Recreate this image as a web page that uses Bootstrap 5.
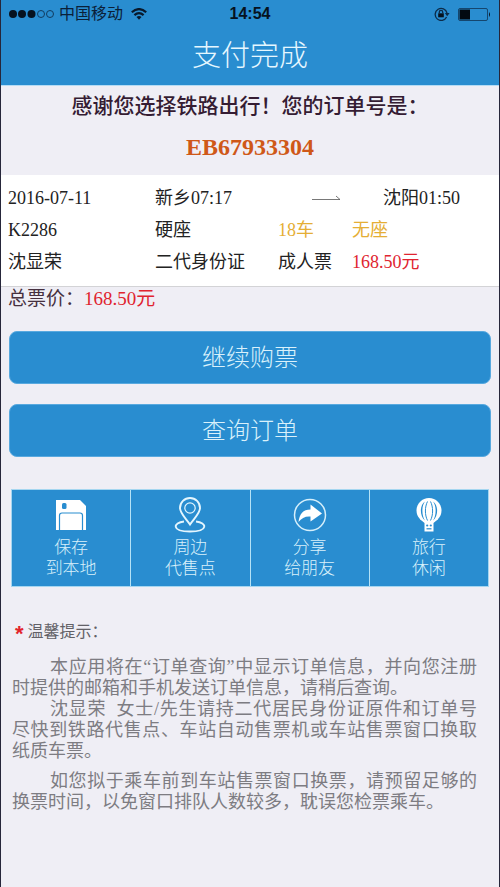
<!DOCTYPE html>
<html lang="zh-CN">
<head>
<meta charset="utf-8">
<meta name="viewport" content="width=device-width, initial-scale=1">
<title>支付完成</title>
<link href="https://cdn.jsdelivr.net/npm/bootstrap@5.3.0/dist/css/bootstrap.min.css" rel="stylesheet">
<style>
:root { --rail-blue: #298dd0; --page-bg: #efeef5; --ice: #d9f1fb; }
body { background: var(--page-bg); color: #222; font-family: "Liberation Serif", "Noto Sans CJK SC", serif; font-size: 18px; line-height: 32px; }
.screen { border: solid #26263a; border-width: 0 1px; }
.ui-sans { font-family: "Liberation Sans", "Noto Sans CJK SC", sans-serif; }
.topbar { background: var(--rail-blue); border-bottom: 1px solid #b5dcf5; }
.statusbar { height: 28px; padding: 0 8px; color: #0b2038; font-size: 16px; line-height: 28px; }
.clock { color: #06121f; }
.page-title { color: #e6f7ff; font-size: 29px; line-height: 56px; height: 57px; font-weight: 300; }
.thanks { color: #351c33; font-size: 21px; line-height: 40px; height: 40px; font-weight: 500; }
.order-no { color: #cf5818; font-size: 24px; line-height: 42px; height: 49px; }
.trip-wrap { background: #fff; border-bottom: 1px solid #d3d3d6; padding: 7px 0 8px 7px; }
.trip { table-layout: fixed; }
.trip td { height: 32px; padding: 0; white-space: nowrap; }
.c-date { width: 147px; } .c-from { width: 123px; } .c-car { width: 74px; }
.leg { padding: 0 39px 0 34px; }
.amber { color: #e5ae35; }
.price { color: #e02430; }
.total { color: #46303f; padding-left: 7px; font-size: 19px; line-height: 23px; }
.actions { padding: 21px 8px 0; gap: 20px; }
.btn-rail { --bs-btn-bg: var(--rail-blue); --bs-btn-color: var(--ice); --bs-btn-border-color: #58a9df; --bs-btn-hover-bg: #2380bf; --bs-btn-hover-color: #fff; --bs-btn-border-radius: 8px; --bs-btn-font-size: 24px; height: 53px; padding: 0; line-height: 53px; font-weight: 300; }
.tiles { margin: 32px 10px 0; gap: 1px; background: #b4e2f6; border: 1px solid #a5d6f0; }
.tile { display: flex; flex-direction: column; align-items: center; gap: 4px; flex: 1 1 0; height: 96px; background: var(--rail-blue); color: var(--ice); border: 0; padding: 7px 0 0; font-size: 17px; line-height: 21px; font-weight: 300; }
.tips { padding: 34px 22px 0 11px; color: #737278; line-height: 21px; }
.tips h2 { margin: 0 0 15px 3px; font-size: 16px; line-height: 21px; color: #626167; font-weight: 400; }
.tips p { margin: 0; text-indent: 38px; text-align: justify; color: #7d7c82; }
.tips p.apart { margin-top: 9px; }
.star { color: #e2232c; font: bold 22px/16px "Liberation Sans", sans-serif; padding-top: 5px; }
</style>
<script src="https://cdn.jsdelivr.net/npm/bootstrap@5.3.0/dist/js/bootstrap.bundle.min.js"></script>
</head>
<body>
<div class="screen min-vh-100">
  <header class="topbar ui-sans">
    <div class="statusbar row g-0 align-items-center">
      <div class="col d-flex align-items-center">
        <svg width="46" height="10" viewBox="0 0 46 10" aria-hidden="true"><g fill="#06121f"><circle cx="4" cy="5" r="4"/><circle cx="13" cy="5" r="4"/><circle cx="22.500" cy="5" r="4"/></g><g fill="none" stroke="#123c60"><circle cx="32" cy="5" r="3.500"/><circle cx="41" cy="5" r="3.500"/></g></svg>
        <span class="ms-1">中国移动</span>
        <svg class="ms-2" width="16" height="12" viewBox="0 0 16 12" fill="none" stroke="#08192c" stroke-width="2.200" aria-hidden="true"><path d="M.8 4.300Q8-2.100 15.200 4.300M3.400 7.100Q8 3 12.600 7.100"/><path d="M5.500 9Q8 7 10.500 9L8 11.800Z" fill="#08192c" stroke="none"/></svg>
      </div>
      <div class="col-auto clock fw-bold">14:54</div>
      <div class="col d-flex justify-content-end align-items-center gap-2">
        <svg width="16" height="14" viewBox="0 0 16 14" fill="none" stroke="#0c2b49" stroke-width="1.300" aria-hidden="true"><path d="M12.600 10A6 6 0 1 1 13 6"/><path d="M10.800 6h4.800L13.200 9.200Z" fill="#0c2b49" stroke="none"/><rect x="4.200" y="6.300" width="5.600" height="4" fill="#06121f" stroke="none"/><path d="M5.300 6.500V5a1.700 1.700 0 0 1 3.400 0v1.500"/></svg>
        <svg width="33" height="13" viewBox="0 0 33 13" aria-hidden="true"><rect x=".5" y=".5" width="29" height="12" rx="1.500" fill="none" stroke="#15466e"/><rect x="1.500" y="1.500" width="10.500" height="10" fill="#020a12"/><path d="M31 4q2 2.500 0 5z" fill="#06121f"/></svg>
      </div>
    </div>
    <h1 class="page-title text-center m-0">支付完成</h1>
  </header>

  <main>
    <section class="text-center">
      <p class="thanks m-0">感谢您选择铁路出行！您的订单号是：</p>
      <p class="order-no m-0 fw-bold">EB67933304</p>
    </section>

    <div class="trip-wrap">
      <table class="trip w-100">
        <colgroup><col class="c-date"><col class="c-from"><col class="c-car"><col></colgroup>
        <tbody>
          <tr><td>2016-07-11</td><td>新乡07:17</td><td colspan="2"><div class="leg d-flex justify-content-between align-items-center"><svg width="29" height="8" viewBox="0 0 29 8" fill="none" stroke="#555" stroke-width=".8" role="img" aria-label="至"><path d="M0 5.500H28L24 2"/></svg><span>沈阳01:50</span></div></td></tr>
          <tr><td>K2286</td><td>硬座</td><td class="amber">18车</td><td class="amber">无座</td></tr>
          <tr><td>沈显荣</td><td>二代身份证</td><td>成人票</td><td class="price">168.50元</td></tr>
        </tbody>
      </table>
    </div>
    <p class="total m-0">总票价：<span class="price">168.50元</span></p>

    <div class="actions d-grid">
      <button type="button" class="btn btn-rail">继续购票</button>
      <button type="button" class="btn btn-rail">查询订单</button>
    </div>

    <nav class="tiles d-flex ui-sans" aria-label="更多服务">
      <button type="button" class="tile">
        <svg width="36" height="36" viewBox="0 0 36 36" aria-hidden="true"><path d="M3 3H27L33 9V33H3Z" fill="#fff"/><rect x="9" y="6" width="4.500" height="6" rx="1.500" fill="#298dd0"/><path d="M6.500 33V18.500Q6.500 16 9 16H27Q29.500 16 29.500 18.500V33" fill="none" stroke="#298dd0" stroke-width="1.200"/></svg>
        <span>保存<br>到本地</span>
      </button>
      <button type="button" class="tile">
        <svg width="36" height="36" viewBox="0 0 36 36" fill="none" stroke="#e4f6fe" aria-hidden="true"><path d="M12 24.500C1 25.500-1 34.500 18 34.500S35 25.500 24 24.500" stroke-width="1.900"/><path d="M18 27.500C14.500 22 8 16.500 8 11A10 10 0 0 1 28 11C28 16.500 21.500 22 18 27.500Z" stroke-width="1.900"/><circle cx="18" cy="11" r="5.200" stroke-width="1.200"/></svg>
        <span>周边<br>代售点</span>
      </button>
      <button type="button" class="tile">
        <svg width="36" height="36" viewBox="0 0 36 36" aria-hidden="true"><circle cx="18" cy="18" r="15.500" fill="none" stroke="#d5effb" stroke-width="1.500"/><path d="M6.500 25C7.500 17 11 12.500 18.500 12.500V7.500L30 16.500L18.500 24.500V19.500C13.500 19 9.500 21 6.500 25Z" fill="#fff"/></svg>
        <span>分享<br>给朋友</span>
      </button>
      <button type="button" class="tile">
        <svg width="36" height="36" viewBox="0 0 36 36" aria-hidden="true"><circle cx="18" cy="13.500" r="12.500" fill="#fff"/><path d="M9 22L13.500 26V34.500H22.500V26L27 22Z" fill="#fff"/><g fill="#298dd0"><path d="M14 4.500C10.500 9 10.500 18 14 23.500C8.500 19 8.500 8 14 4.500Z"/><path d="M22 4.500C25.500 9 25.500 18 22 23.500C27.500 19 27.500 8 22 4.500Z"/></g><path d="M16.500 4.500C13.700 10 13.700 18 16.500 23.500M19.500 4.500C22.300 10 22.300 18 19.500 23.500" fill="none" stroke="#298dd0" stroke-width="1"/><g fill="#298dd0"><circle cx="16.200" cy="28.500" r="1.100"/><circle cx="19.800" cy="28.500" r="1.100"/><rect x="15.500" y="31.200" width="5" height="1.200"/></g></svg>
        <span>旅行<br>休闲</span>
      </button>
    </nav>

    <section class="tips">
      <h2 class="d-flex"><span class="star">*</span><span class="ms-1">温馨提示：</span></h2>
      <p>本应用将在“订单查询”中显示订单信息，并向您注册时提供的邮箱和手机发送订单信息，请稍后查询。</p>
      <p>沈显荣&nbsp; 女士/先生请持二代居民身份证原件和订单号尽快到铁路代售点、车站自动售票机或车站售票窗口换取纸质车票。</p>
      <p class="apart">如您拟于乘车前到车站售票窗口换票，请预留足够的换票时间，以免窗口排队人数较多，耽误您检票乘车。</p>
    </section>
  </main>
</div>
</body>
</html>
